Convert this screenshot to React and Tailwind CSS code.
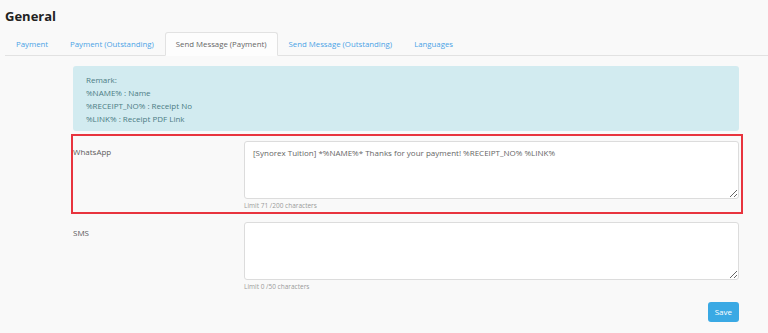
const tabs = [
  'Payment',
  'Payment (Outstanding)',
  'Send Message (Payment)',
  'Send Message (Outstanding)',
  'Languages',
];

function MessageField({ label, value, limit }) {
  return (
    <div className="flex">
      <div className="w-[171px] pt-[5px] leading-[12px] text-[#5c5c5c]">{label}</div>
      <div className="w-[495px]">
        <textarea
          className="block h-[58px] w-full resize-y rounded-[3px] border border-[#dcdcdc] bg-white px-[8px] py-[5px] text-[8px] leading-[12px] text-[#666] outline-none"
          defaultValue={value}
        />
        <div className="mt-[2px] text-[6.5px] leading-[9px] text-[#999]">{limit}</div>
      </div>
    </div>
  );
}

export default function App() {
  const active = 2;

  return (
    <div className="min-h-screen bg-[#f9f9f9] font-['Open_Sans',sans-serif] text-[8px]">
      <h1 className="px-[5px] pt-[6px] text-[13px] font-bold leading-[20px] text-[#222]">General</h1>

      {/* Tabs */}
      <div className="ml-[5px] mt-[6px] flex border-b border-[#e2e2e2] text-[7.8px]">
        {tabs.map((t, i) => (
          <div
            key={t}
            className={`-mb-px rounded-t-[3px] border px-[10px] py-[5px] leading-[12px] ${
              i === active
                ? 'border-[#e2e2e2] border-b-[#fdfdfd] bg-[#fdfdfd] text-[#666]'
                : 'border-transparent text-[#4aa3e6]'
            }`}
          >
            {t}
          </div>
        ))}
      </div>

      <div className="ml-[73px] w-[666px]">
        {/* Remark */}
        <div className="mt-[10px] rounded-[3px] bg-[#d2ebf0] px-[13px] pt-[7px] pb-[6px] leading-[13px] text-[#4c7c84]">
          <div>Remark:</div>
          <div>%NAME% : Name</div>
          <div>%RECEIPT_NO% : Receipt No</div>
          <div>%LINK% : Receipt PDF Link</div>
        </div>

        {/* Highlighted WhatsApp row */}
        <div className="-ml-[2px] -mr-[4px] mt-[3px] h-[80px] border-2 border-[#e8343e] pt-[5px]">
          <MessageField
            label="WhatsApp"
            value="[Synorex Tuition] *%NAME%* Thanks for your payment! %RECEIPT_NO% %LINK%"
            limit="Limit 71 /200 characters"
          />
        </div>

        <div className="mt-[8px]">
          <MessageField label="SMS" value="" limit="Limit 0 /50 characters" />
        </div>

        <div className="mt-[11px] flex justify-end">
          <button className="h-[20px] rounded-[3px] bg-[#3aa9e4] px-[7px] text-[8px] leading-[20px] text-white">
            Save
          </button>
        </div>
      </div>
    </div>
  );
}
